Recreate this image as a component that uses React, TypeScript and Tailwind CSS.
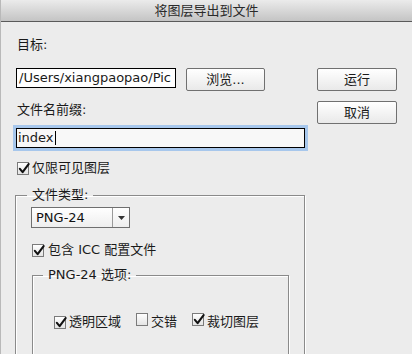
import React from "react";

function Check({ checked }: { checked?: boolean }) {
    return (
        <span className="relative inline-block w-[12px] h-[13px] shrink-0 border border-[#7b7b7b] bg-linear-to-b from-white to-[#e4e4e4]">
            {checked && (
                <svg viewBox="0 0 14 14" className="absolute -top-[1px] left-[0px] w-[12px] h-[13px]">
                    <path d="M2.2 7.4 L5.4 11.2 L12.4 1.8" fill="none" stroke="#111" strokeWidth="2.4" strokeLinecap="round" strokeLinejoin="round" />
                </svg>
            )}
        </span>
    );
}

function Btn({ children, className }: { children: React.ReactNode; className?: string }) {
    return (
        <div className={"flex items-center justify-center h-[23px] border border-[#707070] rounded-[2px] bg-linear-to-b from-white to-[#e9e9e9] text-[13px] text-[#1a1a1a] " + (className ?? "")}>
            {children}
        </div>
    );
}

export default function App() {
    return (
        <div className="w-[412px] h-[354px] overflow-hidden bg-[#ececec] text-[#1a1a1a] text-[13px] font-['DejaVu_Sans','Noto_Sans_CJK_SC',sans-serif] border-l border-[#b9b9b9]">
            {/* Title bar */}
            <div className="h-[22px] border-b border-[#5a5a5a] bg-linear-to-b from-[#ebebeb] to-[#c4c4c4] flex items-center justify-center text-[#2a2a2a]">
                将图层导出到文件
            </div>

            <div className="flex">
                {/* Left column */}
                <div className="w-[304px] pl-[14px] shrink-0">
                    <div className="mt-[15px] h-[16px] leading-[16px] pl-[2px]">目标:</div>

                    <div className="mt-[15px] flex items-start">
                        <div className="ml-[1px] w-[160px] h-[20px] border border-black bg-white overflow-hidden whitespace-nowrap pl-[2px] leading-[18px]">
                            /Users/xiangpaopao/Pic
                        </div>
                        <Btn className="ml-[10px] w-[79px]">浏览...</Btn>
                    </div>

                    <div className="mt-[11px] h-[16px] leading-[16px] pl-[2px]">文件名前缀:</div>

                    <div className="mt-[10px] ml-[1px] h-[20px] border border-black bg-[#f8f8f8] shadow-[0_0_0_3px_#a7c7ec] flex items-center pl-[1px] leading-[18px]">
                        <span>index</span>
                        <span className="ml-[1px] w-[1px] h-[14px] bg-black" />
                    </div>

                    <div className="mt-[13px] h-[14px] flex items-center gap-[3px] pl-[2px]">
                        <Check checked />
                        <span>仅限可见图层</span>
                    </div>

                    {/* 文件类型 */}
                    <fieldset className="mt-[12px] border border-[#8a8a8a] shadow-[inset_1px_1px_0_#fff,1px_1px_0_#fff]">
                        <legend className="ml-[11px] px-[5px] h-[16px] leading-[16px]">文件类型:</legend>
                        <div className="pl-[15px]">
                            <div className="mt-[4px] w-[99px] h-[21px] border border-[#6f6f6f] bg-linear-to-b from-white to-[#eeeeee] flex">
                                <div className="flex-1 pl-[4px] leading-[19px] text-[#111]">PNG-24</div>
                                <div className="w-[17px] border-l border-[#9a9a9a] flex items-center justify-center">
                                    <svg viewBox="0 0 7 4" className="w-[7px] h-[4px]">
                                        <path d="M0 0 H7 L3.5 4 Z" fill="#333" />
                                    </svg>
                                </div>
                            </div>

                            <div className="mt-[15px] h-[14px] flex items-center gap-[4px] pl-[1px]">
                                <Check checked />
                                <span>包含 ICC 配置文件</span>
                            </div>

                            {/* PNG-24 选项 */}
                            <fieldset className="mt-[10px] ml-[1px] w-[257px] border border-[#8a8a8a] shadow-[inset_1px_1px_0_#fff,1px_1px_0_#fff]">
                                <legend className="ml-[10px] px-[5px] h-[16px] leading-[16px]">PNG-24 选项:</legend>
                                <div className="mt-[32px] pl-[21px] h-[14px] flex items-center">
                                    <Check checked />
                                    <span className="ml-[3px]">透明区域</span>
                                    <span className="ml-[15px]"><Check /></span>
                                    <span className="ml-[3px]">交错</span>
                                    <span className="ml-[15px]"><Check checked /></span>
                                    <span className="ml-[3px]">裁切图层</span>
                                </div>
                                <div className="h-[60px]" />
                            </fieldset>
                        </div>
                        <div className="h-[40px]" />
                    </fieldset>
                </div>

                {/* Right column */}
                <div className="ml-[12px] w-[80px] pt-[46px]">
                    <Btn>运行</Btn>
                    <Btn className="mt-[10px]">取消</Btn>
                </div>
            </div>
        </div>
    );
}
